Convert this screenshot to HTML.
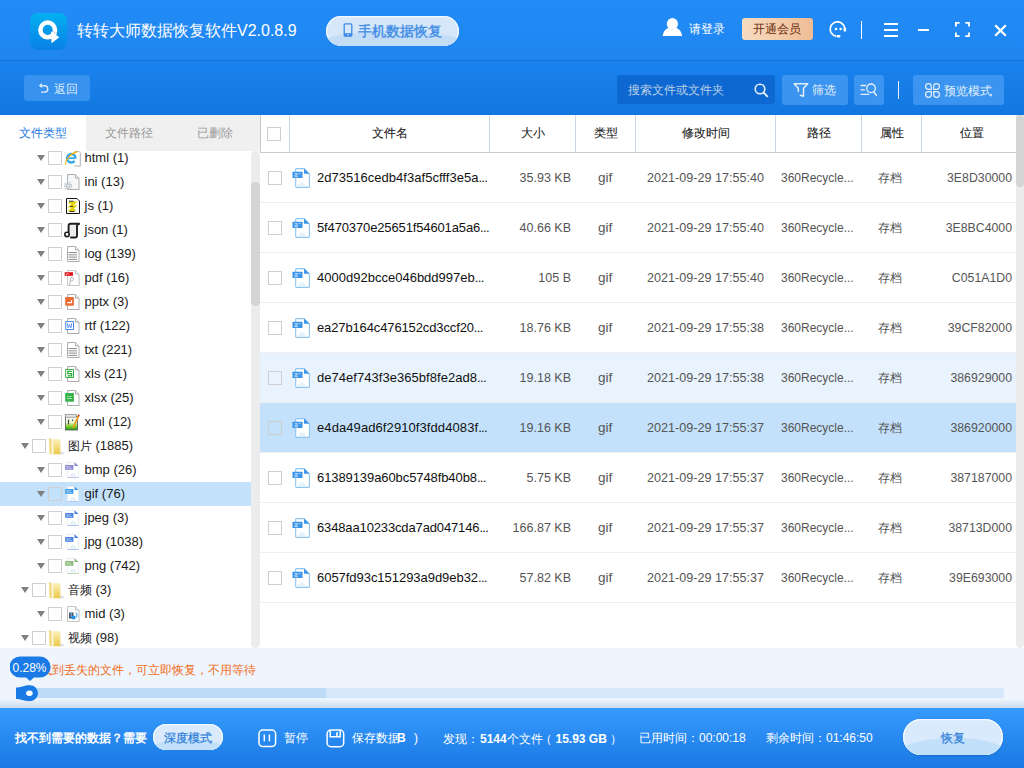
<!DOCTYPE html><html><head><meta charset="utf-8"><style>
*{box-sizing:border-box;margin:0;padding:0}
html,body{width:1024px;height:768px;overflow:hidden;background:#fff;font-family:"Liberation Sans", sans-serif;}
.a{position:absolute}
.t{position:absolute;white-space:nowrap;line-height:1}
#top{left:0;top:0;width:1024px;height:60px;background:linear-gradient(#228bf6,#1f86f0)}
#sep{left:0;top:60px;width:1024px;height:1px;background:#1275d9}
#tb{left:0;top:61px;width:1024px;height:54px;background:linear-gradient(#1b83ee,#1277e0)}
.btn{position:absolute;border-radius:3px;background:#3b94ef}
.cb{position:absolute;width:14px;height:14px;border:1px solid #cfcfcf;background:#fff}
.tri{position:absolute;width:0;height:0;border-left:4.5px solid transparent;border-right:4.5px solid transparent;border-top:6px solid #7f7f7f}
.tr{position:absolute;left:0;width:251px;height:24px}
.tl{position:absolute;font-size:13px;color:#1a1a1a;line-height:1;white-space:nowrap}
.row{position:absolute;left:260px;width:756px;height:50px;border-bottom:1px solid #eeeeee}
.hd{position:absolute;top:115px;height:38px;border-right:1px solid #c9d5e3;border-bottom:1px solid #c9c9c9}
.ht{position:absolute;font-size:12px;color:#222;-webkit-text-stroke:0.1px #222;line-height:1;white-space:nowrap}
.pill{position:absolute;overflow:hidden;background:#d9eafc;box-shadow:inset 0 0 0 1.2px #f2f8ff}
.gl{position:absolute;left:-8%;width:116%;height:100%;border-radius:50%;background:#c3e0fb}
.c{position:absolute;font-size:13px;color:#555;line-height:1;white-space:nowrap}
</style></head><body>
<div class="a" id="top"></div><div class="a" id="sep"></div><div class="a" id="tb"></div>
<svg class="a" style="left:30px;top:13px" width="37" height="37" viewBox="0 0 37 37">
<defs><linearGradient id="lg" x1="0" y1="0" x2="0" y2="1"><stop offset="0" stop-color="#02b1f1"/><stop offset="1" stop-color="#0a80e6"/></linearGradient></defs>
<rect x="0" y="0" width="37" height="37" rx="7.5" fill="url(#lg)"/>
<circle cx="17.7" cy="16.9" r="7.3" fill="none" stroke="#fff" stroke-width="4.5"/>
<path d="M21 18.4L29.3 24.2L21.5 30.2Z" fill="#fff"/>
<path d="M22.8 18.3L27 21.2" stroke="#cfd8e2" stroke-width="1.3" opacity=".85"/>
</svg>
<div class="t" style="left:77px;top:23px;font-size:16px;color:#fff">转转大师数据恢复软件V2.0.8.9</div>
<div class="pill" style="left:326px;top:16px;width:133px;height:30px;border-radius:15px;background:#d6e7f9"><div class="gl" style="top:15px;background:#c4ddf6"></div></div>
<svg class="a" style="left:343px;top:23px" width="10" height="14" viewBox="0 0 10 14"><rect x="1.2" y="0.8" width="7.6" height="12.4" rx="1.2" fill="none" stroke="#3d8ae6" stroke-width="1.3"/><rect x="1.2" y="10.2" width="7.6" height="3" fill="#3d8ae6"/><circle cx="5" cy="11.7" r=".8" fill="#d6e7f9"/></svg>
<div class="t" style="left:358px;top:24px;font-size:14px;color:#3d8ae6;-webkit-text-stroke:0.35px #3d8ae6">手机数据恢复</div>
<svg class="a" style="left:662px;top:18px" width="21" height="18" viewBox="0 0 21 18"><ellipse cx="10.4" cy="5.9" rx="5.6" ry="5.8" fill="#fff"/><path d="M0.7 18c0.4-4.3 3-7.2 6.3-8.2c1 1.2 2.2 1.8 3.4 1.8s2.4-.6 3.4-1.8c3.3 1 5.9 3.9 6.3 8.2z" fill="#fff"/></svg>
<div class="t" style="left:689px;top:22.5px;font-size:12px;color:#fff">请登录</div>
<div class="a" style="left:742px;top:18px;width:71px;height:22px;border-radius:3px;background:linear-gradient(90deg,#f7dcc2,#efbd95)"></div>
<div class="t" style="left:753px;top:22.5px;font-size:12px;color:#6a2e10">开通会员</div>
<svg class="a" style="left:826px;top:19px" width="24" height="22" viewBox="0 0 24 22">
<path d="M10.2 17.3A7.3 7.3 0 1 1 18.7 11.4" fill="none" stroke="#fff" stroke-width="1.7"/>
<circle cx="10" cy="9.9" r="1.25" fill="#fff"/><circle cx="14.6" cy="9.9" r="1.25" fill="#fff"/>
<rect x="17.6" y="8.8" width="2.5" height="3.6" rx=".6" fill="#fff"/>
<rect x="10.6" y="16" width="3.8" height="2.6" rx=".8" fill="#fff"/>
</svg>
<div class="a" style="left:861px;top:21px;width:1px;height:18px;background:#fff"></div>
<svg class="a" style="left:883px;top:22px" width="16" height="16" viewBox="0 0 16 16"><path d="M1 2h14M1 8h14M1 14h14" stroke="#fff" stroke-width="2"/></svg>
<div class="a" style="left:918px;top:29px;width:11px;height:2px;background:#fff"></div>
<svg class="a" style="left:954px;top:21px" width="17" height="17" viewBox="0 0 17 17"><path d="M1.9 5.6V1.9H5.6M11.3 1.9H15V5.6M15 11.4V15.1H11.3M5.6 15.1H1.9V11.4" fill="none" stroke="#fff" stroke-width="1.8"/></svg>
<svg class="a" style="left:993.5px;top:23.5px" width="13" height="13" viewBox="0 0 13 13"><path d="M1.2 1.2l10.6 10.6M11.8 1.2L1.2 11.8" stroke="#fff" stroke-width="2.3"/></svg>
<div class="btn" style="left:24px;top:75px;width:66px;height:26px;background:#3791ee"></div>
<svg class="a" style="left:36px;top:80px" width="16" height="16" viewBox="0 0 16 16"><path d="M5.2 5.8H8.6A3.15 3.15 0 0 1 8.6 12.1H5" fill="none" stroke="#dbeafb" stroke-width="1.4"/><path d="M2.8 5.6L5.9 3V8.2z" fill="#dbeafb"/></svg>
<div class="t" style="left:54px;top:83px;font-size:12px;color:#dbeafb">返回</div>
<div class="btn" style="left:617px;top:75px;width:158px;height:29px;background:#0d68d2"></div>
<div class="t" style="left:628px;top:83.5px;font-size:12px;color:#bccfe6">搜索文件或文件夹</div>
<svg class="a" style="left:754px;top:83px" width="15" height="15" viewBox="0 0 15 15"><circle cx="6" cy="6" r="4.8" fill="none" stroke="#e8f1fb" stroke-width="1.6"/><path d="M9.5 9.5l4.3 4.3" stroke="#e8f1fb" stroke-width="1.8"/></svg>
<div class="btn" style="left:782px;top:75px;width:66px;height:30px"></div>
<svg class="a" style="left:790px;top:78px" width="24" height="24" viewBox="0 0 24 24"><path d="M4.2 5.8H17.8M4.2 5.8L8.3 10.2V13.6M17.8 5.8L13.5 10.2V18.3L10.3 17.2" fill="none" stroke="#e6f0fb" stroke-width="1.5" stroke-linejoin="round" stroke-linecap="round"/></svg>
<div class="t" style="left:812px;top:84px;font-size:12px;color:#e6f0fb">筛选</div>
<div class="btn" style="left:854px;top:75px;width:30px;height:30px"></div>
<svg class="a" style="left:856px;top:78px" width="24" height="24" viewBox="0 0 24 24"><path d="M5 7.5h4.5M5 11.9h3.4M5 16.4h7.7" stroke="#e6f0fb" stroke-width="1.3" stroke-linecap="round"/><circle cx="15" cy="10.3" r="4.3" fill="none" stroke="#e6f0fb" stroke-width="1.3"/><path d="M18 14.3L20.5 17.5" stroke="#e6f0fb" stroke-width="1.4" stroke-linecap="round"/></svg>
<div class="a" style="left:898px;top:81px;width:1px;height:18px;background:#e6f0fb"></div>
<div class="btn" style="left:913px;top:75px;width:91px;height:30px"></div>
<svg class="a" style="left:924px;top:82px" width="17" height="17" viewBox="0 0 17 17"><g fill="none" stroke="#e6f0fb" stroke-width="1.2"><path d="M7.3 7.3H4.45A2.85 2.85 0 1 1 7.3 4.45z"/><path d="M9.7 7.3H12.55A2.85 2.85 0 1 0 9.7 4.45z"/><path d="M7.3 9.7H4.45A2.85 2.85 0 1 0 7.3 12.55z"/><path d="M9.7 9.7H12.55A2.85 2.85 0 1 1 9.7 12.55z"/></g></svg>
<div class="t" style="left:944px;top:84.5px;font-size:12px;color:#e6f0fb">预览模式</div>
<div class="a" style="left:86px;top:115px;width:174px;height:36px;background:#f0f0f0"></div>
<div class="t" style="left:19px;top:127px;font-size:12px;color:#1b78e2">文件类型</div>
<div class="t" style="left:105px;top:127px;font-size:12px;color:#9a9a9a">文件路径</div>
<div class="t" style="left:197px;top:127px;font-size:12px;color:#9a9a9a">已删除</div>
<div class="a" style="left:0;top:151px;width:260px;height:497px;overflow:hidden">
<div class="tr" style="top:-5px;">
<div class="tri" style="left:37px;top:9px"></div>
<div class="cb" style="left:48px;top:5px;"></div>
<svg class="a" style="left:64px;top:4px" width="17" height="17" viewBox="0 0 17 17"><path d="M10.5 1.5h4.5l1.3 1.3v13.2h-6" fill="#fff" stroke="#b0b0b0"/><path d="M11.6 8.2A4.3 4.3 0 1 0 10.6 11" fill="none" stroke="#36a6ec" stroke-width="2.4"/><path d="M3.2 8.2H11.6" stroke="#36a6ec" stroke-width="1.8"/><path d="M1.2 14.5C1.5 9.5 7 2.8 13.5 1.6" fill="none" stroke="#f4b400" stroke-width="1.2"/></svg>
<div class="tl" style="left:84.5px;top:5px">html (1)</div>
</div>
<div class="tr" style="top:19px;">
<div class="tri" style="left:37px;top:9px"></div>
<div class="cb" style="left:48px;top:5px;"></div>
<svg class="a" style="left:64px;top:4px" width="17" height="17" viewBox="0 0 17 17"><path d="M3.5 0.5h8l3.5 3.5v11.5h-11.5z" fill="#f4f6f8" stroke="#aeaeae"/><path d="M11.5 0.5v3.5h3.5" fill="#f0f0f0" stroke="#aeaeae"/><path d="M15.5 4.5v11.5" stroke="#d8d8d8"/><circle cx="4" cy="12" r="3.6" fill="none" stroke="#b8c0c8" stroke-width="1.4" stroke-dasharray="1.4 1.1"/><circle cx="4" cy="12" r="2.6" fill="#c2c9d0"/><circle cx="4" cy="12" r="1" fill="#eef0f2"/></svg>
<div class="tl" style="left:84.5px;top:5px">ini (13)</div>
</div>
<div class="tr" style="top:43px;">
<div class="tri" style="left:37px;top:9px"></div>
<div class="cb" style="left:48px;top:5px;"></div>
<svg class="a" style="left:64px;top:4px" width="17" height="17" viewBox="0 0 17 17"><path d="M2.5 0.5h10.5l2.5 2.5v12.5h-13z" fill="#fff" stroke="#151515"/><path d="M4.8 4.6h6l-4.4 3.8h4.4l-4.4 3.8h5" fill="none" stroke="#e6d400" stroke-width="2.2"/><path d="M5 3.2h4.5M6 8.4h3M5.5 13.5h5" stroke="#222" stroke-width="0.9"/></svg>
<div class="tl" style="left:84.5px;top:5px">js (1)</div>
</div>
<div class="tr" style="top:67px;">
<div class="tri" style="left:37px;top:9px"></div>
<div class="cb" style="left:48px;top:5px;"></div>
<svg class="a" style="left:64px;top:4px" width="17" height="17" viewBox="0 0 17 17"><path d="M4.5 2h8.5v13h-8.5z" fill="#ececec"/><path d="M4.6 10.5V3.6c0-1 .8-1.9 1.9-1.9H15.6" fill="none" stroke="#1e1e1e" stroke-width="1.9"/><path d="M15.6 1.7c-1.6 0-2.6.9-2.6 2.5V14c0 .8-.6 1.5-1.5 1.5H6.2" fill="none" stroke="#1e1e1e" stroke-width="1.9"/><circle cx="3" cy="12.4" r="2.2" fill="#fff" stroke="#1e1e1e" stroke-width="1.6"/></svg>
<div class="tl" style="left:84.5px;top:5px">json (1)</div>
</div>
<div class="tr" style="top:91px;">
<div class="tri" style="left:37px;top:9px"></div>
<div class="cb" style="left:48px;top:5px;"></div>
<svg class="a" style="left:64px;top:4px" width="17" height="17" viewBox="0 0 17 17"><path d="M3.5 0.5h8l3.5 3.5v11.5h-11.5z" fill="#fff" stroke="#aeaeae"/><path d="M11.5 0.5v3.5h3.5" fill="#f0f0f0" stroke="#aeaeae"/><path d="M15.5 4.5v11.5" stroke="#d8d8d8"/><path d="M4.5 6.5h8.5M4.5 8.8h8.5M4.5 11.1h8.5M4.5 13.4h8.5" stroke="#8c8c8c" stroke-width="1"/></svg>
<div class="tl" style="left:84.5px;top:5px">log (139)</div>
</div>
<div class="tr" style="top:115px;">
<div class="tri" style="left:37px;top:9px"></div>
<div class="cb" style="left:48px;top:5px;"></div>
<svg class="a" style="left:64px;top:4px" width="17" height="17" viewBox="0 0 17 17"><path d="M3.5 0.5h8l3.5 3.5v11.5h-11.5z" fill="#fff" stroke="#c8c8c8"/><path d="M11.5 0.5v3.5h3.5" fill="#f0f0f0" stroke="#c8c8c8"/><path d="M15.5 4.5v11.5" stroke="#d8d8d8"/><rect x="0.7" y="2.2" width="8.3" height="3.6" fill="#e3141d"/><path d="M2.2 5l1-1.4h1.2" fill="none" stroke="#fff" stroke-width="0.8"/><path d="M5.5 15.5c.4-2 .8-5 1.3-8.2c2.2-.2 3.2 1 2.7 2.4c-.5 1.4-2 1.6-3.2 1.1" fill="none" stroke="#b4b4b4" stroke-width="1"/></svg>
<div class="tl" style="left:84.5px;top:5px">pdf (16)</div>
</div>
<div class="tr" style="top:139px;">
<div class="tri" style="left:37px;top:9px"></div>
<div class="cb" style="left:48px;top:5px;"></div>
<svg class="a" style="left:64px;top:4px" width="17" height="17" viewBox="0 0 17 17"><path d="M3.5 0.5h8l3.5 3.5v11.5h-11.5z" fill="#fff" stroke="#aeaeae"/><path d="M11.5 0.5v3.5h3.5" fill="#f0f0f0" stroke="#aeaeae"/><path d="M15.5 4.5v11.5" stroke="#d8d8d8"/><rect x="1.2" y="3" width="8.7" height="8.7" rx="1" fill="#ec6a35"/><path d="M3.3 8.6h4.2V6.2" fill="none" stroke="#fff" stroke-width="1.2"/></svg>
<div class="tl" style="left:84.5px;top:5px">pptx (3)</div>
</div>
<div class="tr" style="top:163px;">
<div class="tri" style="left:37px;top:9px"></div>
<div class="cb" style="left:48px;top:5px;"></div>
<svg class="a" style="left:64px;top:4px" width="17" height="17" viewBox="0 0 17 17"><path d="M3.5 0.5h8l3.5 3.5v11.5h-11.5z" fill="#fff" stroke="#aeaeae"/><path d="M11.5 0.5v3.5h3.5" fill="#f0f0f0" stroke="#aeaeae"/><path d="M15.5 4.5v11.5" stroke="#d8d8d8"/><path d="M1.7 3.5h7.8v8H1.7z" fill="#fff" stroke="#4a8af0" stroke-width="1"/><path d="M3.2 5.2l.9 4.6 1.4-3.2 1.4 3.2.9-4.6" fill="none" stroke="#4a8af0" stroke-width="0.9"/></svg>
<div class="tl" style="left:84.5px;top:5px">rtf (122)</div>
</div>
<div class="tr" style="top:187px;">
<div class="tri" style="left:37px;top:9px"></div>
<div class="cb" style="left:48px;top:5px;"></div>
<svg class="a" style="left:64px;top:4px" width="17" height="17" viewBox="0 0 17 17"><path d="M3.5 0.5h8l3.5 3.5v11.5h-11.5z" fill="#fff" stroke="#aeaeae"/><path d="M11.5 0.5v3.5h3.5" fill="#f0f0f0" stroke="#aeaeae"/><path d="M15.5 4.5v11.5" stroke="#d8d8d8"/><path d="M4.5 6.5h8.5M4.5 8.8h8.5M4.5 11.1h8.5M4.5 13.4h8.5" stroke="#8c8c8c" stroke-width="1"/></svg>
<div class="tl" style="left:84.5px;top:5px">txt (221)</div>
</div>
<div class="tr" style="top:211px;">
<div class="tri" style="left:37px;top:9px"></div>
<div class="cb" style="left:48px;top:5px;"></div>
<svg class="a" style="left:64px;top:4px" width="17" height="17" viewBox="0 0 17 17"><path d="M3.5 0.5h8l3.5 3.5v11.5h-11.5z" fill="#fff" stroke="#aeaeae"/><path d="M11.5 0.5v3.5h3.5" fill="#f0f0f0" stroke="#aeaeae"/><path d="M15.5 4.5v11.5" stroke="#d8d8d8"/><path d="M1.7 3.5h7.8v8H1.7z" fill="#fff" stroke="#39ad45" stroke-width="1"/><path d="M7.8 5.3H3.9v2.3h3.7v2.3H3.6" fill="none" stroke="#2eaa3c" stroke-width="1.3"/></svg>
<div class="tl" style="left:84.5px;top:5px">xls (21)</div>
</div>
<div class="tr" style="top:235px;">
<div class="tri" style="left:37px;top:9px"></div>
<div class="cb" style="left:48px;top:5px;"></div>
<svg class="a" style="left:64px;top:4px" width="17" height="17" viewBox="0 0 17 17"><path d="M3.5 0.5h8l3.5 3.5v11.5h-11.5z" fill="#fff" stroke="#aeaeae"/><path d="M11.5 0.5v3.5h3.5" fill="#f0f0f0" stroke="#aeaeae"/><path d="M15.5 4.5v11.5" stroke="#d8d8d8"/><rect x="1.2" y="3" width="8.7" height="8.7" fill="#35b24a"/><path d="M3.2 6.5h1.5M5.5 6.5h2M3.2 8.5h4.5" stroke="#d8f4dc" stroke-width="0.8"/></svg>
<div class="tl" style="left:84.5px;top:5px">xlsx (25)</div>
</div>
<div class="tr" style="top:259px;">
<div class="tri" style="left:37px;top:9px"></div>
<div class="cb" style="left:48px;top:5px;"></div>
<svg class="a" style="left:64px;top:4px" width="17" height="17" viewBox="0 0 17 17"><defs><linearGradient id="xg" x1="0" y1="0" x2="0" y2="1"><stop offset="0" stop-color="#fff"/><stop offset=".45" stop-color="#e8f5d0"/><stop offset=".7" stop-color="#8ad62a"/><stop offset="1" stop-color="#1e9a1e"/></linearGradient></defs><rect x="1.5" y="2.5" width="12" height="13.5" fill="url(#xg)" stroke="#555" stroke-width="0.8"/><rect x="1.2" y="0.4" width="11" height="2.8" fill="#dfe4e8" stroke="#777" stroke-width="0.6"/><path d="M4.5 5.5v5M8.5 5.5v1.5" stroke="#444" stroke-width="1.2"/><path d="M9 14L14.8 1.2" stroke="#eaa21e" stroke-width="1.8"/><path d="M14.2 2.5l.8-1.8" stroke="#c03030" stroke-width="1.6"/></svg>
<div class="tl" style="left:84.5px;top:5px">xml (12)</div>
</div>
<div class="tr" style="top:283px;">
<div class="tri" style="left:21px;top:9px"></div>
<div class="cb" style="left:32px;top:5px;"></div>
<svg class="a" style="left:48px;top:3px" width="17" height="19" viewBox="0 0 17 19"><defs><linearGradient id="fg" x1="0" y1="0" x2="0" y2="1"><stop offset="0" stop-color="#fbf0b6"/><stop offset="1" stop-color="#ebc94c"/></linearGradient><linearGradient id="ff" x1="0" y1="0" x2="1" y2="0"><stop offset="0" stop-color="#efd57a"/><stop offset="1" stop-color="#f7e7a8"/></linearGradient></defs><ellipse cx="13" cy="16" rx="3" ry="1.6" fill="#c8c8d0" opacity=".55"/><path d="M5.2 2.2h6.2c.6 0 1 .4 1 1v14H5.4z" fill="url(#fg)"/><path d="M1 0.8L4.6 2.6L5.4 17.6L1.4 16.8z" fill="url(#ff)"/><path d="M4 2.5L4.6 17" stroke="#fff" stroke-width="0.9" opacity=".9"/></svg>
<div class="tl" style="left:68.4px;top:5px"><span style="font-size:12.2px;letter-spacing:-0.3px">图片</span> (1885)</div>
</div>
<div class="tr" style="top:307px;">
<div class="tri" style="left:37px;top:9px"></div>
<div class="cb" style="left:48px;top:5px;"></div>
<svg class="a" style="left:64px;top:4px" width="17" height="17" viewBox="0 0 17 17"><path d="M3.5 0.5h7.5l3.5 3.5v11.5h-11z" fill="#fff" stroke="#e4e9ef" stroke-width="0.8"/><path d="M3.5 15.5h11" stroke="#c3c1ea" stroke-width="1"/><path d="M10.5 0.3v3.7h4z" fill="#8a88d0"/><rect x="1.2" y="3" width="8.2" height="4.8" fill="#8a88d0"/><path d="M2.5 4.5h1.6v1.8H2.5M5.2 4.5h1.4M5.2 6.3h2.5" stroke="#fff" stroke-width="0.7" fill="none" opacity=".8"/><path d="M5.5 14.5c.6-2.2 1.8-3.5 3.5-3.5s2.9 1.3 3.5 3.5z" fill="#e8f0f8"/></svg>
<div class="tl" style="left:84.5px;top:5px">bmp (26)</div>
</div>
<div class="tr" style="top:331px;background:#c3e1fb">
<div class="tri" style="left:37px;top:9px"></div>
<div class="cb" style="left:48px;top:5px;background:transparent"></div>
<svg class="a" style="left:64px;top:4px" width="17" height="17" viewBox="0 0 17 17"><path d="M3.5 0.5h7.5l3.5 3.5v11.5h-11z" fill="#fff" stroke="#e4e9ef" stroke-width="0.8"/><path d="M3.5 15.5h11" stroke="#a9d0f3" stroke-width="1"/><path d="M10.5 0.3v3.7h4z" fill="#3c9be8"/><rect x="1.2" y="3" width="8.2" height="4.8" fill="#3c9be8"/><path d="M2.5 4.5h1.6v1.8H2.5M5.2 4.5h1.4M5.2 6.3h2.5" stroke="#fff" stroke-width="0.7" fill="none" opacity=".8"/><path d="M5.5 14.5c.6-2.2 1.8-3.5 3.5-3.5s2.9 1.3 3.5 3.5z" fill="#e8f0f8"/></svg>
<div class="tl" style="left:84.5px;top:5px">gif (76)</div>
</div>
<div class="tr" style="top:355px;">
<div class="tri" style="left:37px;top:9px"></div>
<div class="cb" style="left:48px;top:5px;"></div>
<svg class="a" style="left:64px;top:4px" width="17" height="17" viewBox="0 0 17 17"><path d="M3.5 0.5h7.5l3.5 3.5v11.5h-11z" fill="#fff" stroke="#e4e9ef" stroke-width="0.8"/><path d="M3.5 15.5h11" stroke="#a9c4f0" stroke-width="1"/><path d="M10.5 0.3v3.7h4z" fill="#4a80e0"/><rect x="1.2" y="3" width="8.2" height="4.8" fill="#4a80e0"/><path d="M2.5 4.5h1.6v1.8H2.5M5.2 4.5h1.4M5.2 6.3h2.5" stroke="#fff" stroke-width="0.7" fill="none" opacity=".8"/><path d="M5.5 14.5c.6-2.2 1.8-3.5 3.5-3.5s2.9 1.3 3.5 3.5z" fill="#e8f0f8"/></svg>
<div class="tl" style="left:84.5px;top:5px">jpeg (3)</div>
</div>
<div class="tr" style="top:379px;">
<div class="tri" style="left:37px;top:9px"></div>
<div class="cb" style="left:48px;top:5px;"></div>
<svg class="a" style="left:64px;top:4px" width="17" height="17" viewBox="0 0 17 17"><path d="M3.5 0.5h7.5l3.5 3.5v11.5h-11z" fill="#fff" stroke="#e4e9ef" stroke-width="0.8"/><path d="M3.5 15.5h11" stroke="#a9c4f0" stroke-width="1"/><path d="M10.5 0.3v3.7h4z" fill="#4a80e0"/><rect x="1.2" y="3" width="8.2" height="4.8" fill="#4a80e0"/><path d="M2.5 4.5h1.6v1.8H2.5M5.2 4.5h1.4M5.2 6.3h2.5" stroke="#fff" stroke-width="0.7" fill="none" opacity=".8"/><path d="M5.5 14.5c.6-2.2 1.8-3.5 3.5-3.5s2.9 1.3 3.5 3.5z" fill="#e8f0f8"/></svg>
<div class="tl" style="left:84.5px;top:5px">jpg (1038)</div>
</div>
<div class="tr" style="top:403px;">
<div class="tri" style="left:37px;top:9px"></div>
<div class="cb" style="left:48px;top:5px;"></div>
<svg class="a" style="left:64px;top:4px" width="17" height="17" viewBox="0 0 17 17"><path d="M3.5 0.5h7.5l3.5 3.5v11.5h-11z" fill="#fff" stroke="#e4e9ef" stroke-width="0.8"/><path d="M3.5 15.5h11" stroke="#b9dcae" stroke-width="1"/><path d="M10.5 0.3v3.7h4z" fill="#8ab87a"/><rect x="1.2" y="3" width="8.2" height="4.8" fill="#8ab87a"/><path d="M2.5 4.5h1.6v1.8H2.5M5.2 4.5h1.4M5.2 6.3h2.5" stroke="#fff" stroke-width="0.7" fill="none" opacity=".8"/><path d="M5.5 14.5c.6-2.2 1.8-3.5 3.5-3.5s2.9 1.3 3.5 3.5z" fill="#e8f0f8"/></svg>
<div class="tl" style="left:84.5px;top:5px">png (742)</div>
</div>
<div class="tr" style="top:427px;">
<div class="tri" style="left:21px;top:9px"></div>
<div class="cb" style="left:32px;top:5px;"></div>
<svg class="a" style="left:48px;top:3px" width="17" height="19" viewBox="0 0 17 19"><defs><linearGradient id="fg" x1="0" y1="0" x2="0" y2="1"><stop offset="0" stop-color="#fbf0b6"/><stop offset="1" stop-color="#ebc94c"/></linearGradient><linearGradient id="ff" x1="0" y1="0" x2="1" y2="0"><stop offset="0" stop-color="#efd57a"/><stop offset="1" stop-color="#f7e7a8"/></linearGradient></defs><ellipse cx="13" cy="16" rx="3" ry="1.6" fill="#c8c8d0" opacity=".55"/><path d="M5.2 2.2h6.2c.6 0 1 .4 1 1v14H5.4z" fill="url(#fg)"/><path d="M1 0.8L4.6 2.6L5.4 17.6L1.4 16.8z" fill="url(#ff)"/><path d="M4 2.5L4.6 17" stroke="#fff" stroke-width="0.9" opacity=".9"/></svg>
<div class="tl" style="left:68.4px;top:5px"><span style="font-size:12.2px;letter-spacing:-0.3px">音频</span> (3)</div>
</div>
<div class="tr" style="top:451px;">
<div class="tri" style="left:37px;top:9px"></div>
<div class="cb" style="left:48px;top:5px;"></div>
<svg class="a" style="left:64px;top:4px" width="17" height="17" viewBox="0 0 17 17"><path d="M3.5 0.5h8l3.5 3.5v11.5h-11.5z" fill="#fff" stroke="#c4c4c4"/><path d="M11.5 0.5v3.5h3.5" fill="#f0f0f0" stroke="#c4c4c4"/><path d="M15.5 4.5v11.5" stroke="#d8d8d8"/><rect x="5" y="6.5" width="4.5" height="6" fill="#4a5868"/><rect x="6.5" y="7" width="1.5" height="4" fill="#3ac0f0"/><rect x="6.3" y="8.5" width="1.2" height="1.2" fill="#e83040"/><circle cx="9.6" cy="11.6" r="2" fill="#1e8ee8"/><path d="M11.6 6.6a3 3 0 0 1 .6 4.6" fill="none" stroke="#3aa0f0" stroke-width="1.1"/></svg>
<div class="tl" style="left:84.5px;top:5px">mid (3)</div>
</div>
<div class="tr" style="top:475px;">
<div class="tri" style="left:21px;top:9px"></div>
<div class="cb" style="left:32px;top:5px;"></div>
<svg class="a" style="left:48px;top:3px" width="17" height="19" viewBox="0 0 17 19"><defs><linearGradient id="fg" x1="0" y1="0" x2="0" y2="1"><stop offset="0" stop-color="#fbf0b6"/><stop offset="1" stop-color="#ebc94c"/></linearGradient><linearGradient id="ff" x1="0" y1="0" x2="1" y2="0"><stop offset="0" stop-color="#efd57a"/><stop offset="1" stop-color="#f7e7a8"/></linearGradient></defs><ellipse cx="13" cy="16" rx="3" ry="1.6" fill="#c8c8d0" opacity=".55"/><path d="M5.2 2.2h6.2c.6 0 1 .4 1 1v14H5.4z" fill="url(#fg)"/><path d="M1 0.8L4.6 2.6L5.4 17.6L1.4 16.8z" fill="url(#ff)"/><path d="M4 2.5L4.6 17" stroke="#fff" stroke-width="0.9" opacity=".9"/></svg>
<div class="tl" style="left:68.4px;top:5px"><span style="font-size:12.2px;letter-spacing:-0.3px">视频</span> (98)</div>
</div>
<div class="a" style="left:251px;top:0;width:9px;height:497px;border-radius:4.5px;background:#ececec"></div>
<div class="a" style="left:251px;top:31px;width:9px;height:124px;border-radius:4.5px;background:#d4d4d4"></div>
</div>
<div class="hd" style="left:260px;width:30px;border-left:1px solid #c9c9c9;"></div>
<div class="hd" style="left:289px;width:201px;"></div>
<div class="hd" style="left:489px;width:87px;"></div>
<div class="hd" style="left:575px;width:61px;"></div>
<div class="hd" style="left:635px;width:141px;"></div>
<div class="hd" style="left:775px;width:87px;"></div>
<div class="hd" style="left:861px;width:61px;"></div>
<div class="hd" style="left:921px;width:96px;"></div>
<div class="cb" style="left:267px;top:127px"></div>
<div class="ht" style="left:372px;top:127.3px">文件名</div>
<div class="ht" style="left:521px;top:127.3px">大小</div>
<div class="ht" style="left:594px;top:127.3px">类型</div>
<div class="ht" style="left:682px;top:127.3px">修改时间</div>
<div class="ht" style="left:807px;top:127.3px">路径</div>
<div class="ht" style="left:880px;top:127.3px">属性</div>
<div class="ht" style="left:960px;top:127.3px">位置</div>
<div class="row" style="top:153px;background:#fff"></div>
<div class="cb" style="left:268px;top:171px;"></div>
<svg class="a" style="left:292px;top:168px" width="18" height="20" viewBox="0 0 18 20"><path d="M4.5 0.6h7.5l5.4 5.4v12.6a0.8 0.8 0 0 1-0.8 0.8H4.5a0.8 0.8 0 0 1-0.8-0.8V1.4a0.8 0.8 0 0 1 0.8-0.8z" fill="#fff" stroke="#8dc4f0" stroke-width="1.1"/><path d="M12 0.6v4.6a0.6 0.6 0 0 0 .6.6h4.8z" fill="#3c95e8"/><rect x="0.5" y="3.8" width="10" height="6.1" rx="0.5" fill="#3c95e8"/><path d="M2.8 5.6h2.4v1.6H3.2v1.5h2.8M6.8 5.6h1.6" stroke="#dcedfc" fill="none" stroke-width="0.8"/><path d="M6 18.2c.5-2.6 2.1-4 4-4s3.5 1.4 4 4z" fill="#e5f3fd"/></svg>
<div class="c" style="left:317px;top:171px;color:#111;letter-spacing:0.028px">2d73516cedb4f3af5cfff3e5a<span style="letter-spacing:-0.7px">...</span></div>
<div class="c" style="right:453px;top:172px;font-size:12.5px">35.93 KB</div>
<div class="c" style="left:598px;top:171px;font-size:13.5px">gif</div>
<div class="c" style="left:647px;top:172px;font-size:12.6px">2021-09-29 17:55:40</div>
<div class="c" style="left:781px;top:172px;font-size:12px">360Recycle...</div>
<div class="c" style="left:878px;top:171.6px;font-size:12px">存档</div>
<div class="c" style="right:12px;top:172.3px;font-size:12.3px">3E8D30000</div>
<div class="row" style="top:203px;background:#fff"></div>
<div class="cb" style="left:268px;top:221px;"></div>
<svg class="a" style="left:292px;top:218px" width="18" height="20" viewBox="0 0 18 20"><path d="M4.5 0.6h7.5l5.4 5.4v12.6a0.8 0.8 0 0 1-0.8 0.8H4.5a0.8 0.8 0 0 1-0.8-0.8V1.4a0.8 0.8 0 0 1 0.8-0.8z" fill="#fff" stroke="#8dc4f0" stroke-width="1.1"/><path d="M12 0.6v4.6a0.6 0.6 0 0 0 .6.6h4.8z" fill="#3c95e8"/><rect x="0.5" y="3.8" width="10" height="6.1" rx="0.5" fill="#3c95e8"/><path d="M2.8 5.6h2.4v1.6H3.2v1.5h2.8M6.8 5.6h1.6" stroke="#dcedfc" fill="none" stroke-width="0.8"/><path d="M6 18.2c.5-2.6 2.1-4 4-4s3.5 1.4 4 4z" fill="#e5f3fd"/></svg>
<div class="c" style="left:317px;top:221px;color:#111;letter-spacing:-0.133px">5f470370e25651f54601a5a6<span style="letter-spacing:-0.7px">...</span></div>
<div class="c" style="right:453px;top:222px;font-size:12.5px">40.66 KB</div>
<div class="c" style="left:598px;top:221px;font-size:13.5px">gif</div>
<div class="c" style="left:647px;top:222px;font-size:12.6px">2021-09-29 17:55:40</div>
<div class="c" style="left:781px;top:222px;font-size:12px">360Recycle...</div>
<div class="c" style="left:878px;top:221.6px;font-size:12px">存档</div>
<div class="c" style="right:12px;top:222.3px;font-size:12.3px">3E8BC4000</div>
<div class="row" style="top:253px;background:#fff"></div>
<div class="cb" style="left:268px;top:271px;"></div>
<svg class="a" style="left:292px;top:268px" width="18" height="20" viewBox="0 0 18 20"><path d="M4.5 0.6h7.5l5.4 5.4v12.6a0.8 0.8 0 0 1-0.8 0.8H4.5a0.8 0.8 0 0 1-0.8-0.8V1.4a0.8 0.8 0 0 1 0.8-0.8z" fill="#fff" stroke="#8dc4f0" stroke-width="1.1"/><path d="M12 0.6v4.6a0.6 0.6 0 0 0 .6.6h4.8z" fill="#3c95e8"/><rect x="0.5" y="3.8" width="10" height="6.1" rx="0.5" fill="#3c95e8"/><path d="M2.8 5.6h2.4v1.6H3.2v1.5h2.8M6.8 5.6h1.6" stroke="#dcedfc" fill="none" stroke-width="0.8"/><path d="M6 18.2c.5-2.6 2.1-4 4-4s3.5 1.4 4 4z" fill="#e5f3fd"/></svg>
<div class="c" style="left:317px;top:271px;color:#111;letter-spacing:0.009px">4000d92bcce046bdd997eb<span style="letter-spacing:-0.7px">...</span></div>
<div class="c" style="right:453px;top:272px;font-size:12.5px">105 B</div>
<div class="c" style="left:598px;top:271px;font-size:13.5px">gif</div>
<div class="c" style="left:647px;top:272px;font-size:12.6px">2021-09-29 17:55:40</div>
<div class="c" style="left:781px;top:272px;font-size:12px">360Recycle...</div>
<div class="c" style="left:878px;top:271.6px;font-size:12px">存档</div>
<div class="c" style="right:12px;top:272.3px;font-size:12.3px">C051A1D0</div>
<div class="row" style="top:303px;background:#fff"></div>
<div class="cb" style="left:268px;top:321px;"></div>
<svg class="a" style="left:292px;top:318px" width="18" height="20" viewBox="0 0 18 20"><path d="M4.5 0.6h7.5l5.4 5.4v12.6a0.8 0.8 0 0 1-0.8 0.8H4.5a0.8 0.8 0 0 1-0.8-0.8V1.4a0.8 0.8 0 0 1 0.8-0.8z" fill="#fff" stroke="#8dc4f0" stroke-width="1.1"/><path d="M12 0.6v4.6a0.6 0.6 0 0 0 .6.6h4.8z" fill="#3c95e8"/><rect x="0.5" y="3.8" width="10" height="6.1" rx="0.5" fill="#3c95e8"/><path d="M2.8 5.6h2.4v1.6H3.2v1.5h2.8M6.8 5.6h1.6" stroke="#dcedfc" fill="none" stroke-width="0.8"/><path d="M6 18.2c.5-2.6 2.1-4 4-4s3.5 1.4 4 4z" fill="#e5f3fd"/></svg>
<div class="c" style="left:317px;top:321px;color:#111;letter-spacing:-0.126px">ea27b164c476152cd3ccf20<span style="letter-spacing:-0.7px">...</span></div>
<div class="c" style="right:453px;top:322px;font-size:12.5px">18.76 KB</div>
<div class="c" style="left:598px;top:321px;font-size:13.5px">gif</div>
<div class="c" style="left:647px;top:322px;font-size:12.6px">2021-09-29 17:55:38</div>
<div class="c" style="left:781px;top:322px;font-size:12px">360Recycle...</div>
<div class="c" style="left:878px;top:321.6px;font-size:12px">存档</div>
<div class="c" style="right:12px;top:322.3px;font-size:12.3px">39CF82000</div>
<div class="row" style="top:353px;background:#e8f3fd"></div>
<div class="cb" style="left:268px;top:371px;background:transparent"></div>
<svg class="a" style="left:292px;top:368px" width="18" height="20" viewBox="0 0 18 20"><path d="M4.5 0.6h7.5l5.4 5.4v12.6a0.8 0.8 0 0 1-0.8 0.8H4.5a0.8 0.8 0 0 1-0.8-0.8V1.4a0.8 0.8 0 0 1 0.8-0.8z" fill="#fff" stroke="#8dc4f0" stroke-width="1.1"/><path d="M12 0.6v4.6a0.6 0.6 0 0 0 .6.6h4.8z" fill="#3c95e8"/><rect x="0.5" y="3.8" width="10" height="6.1" rx="0.5" fill="#3c95e8"/><path d="M2.8 5.6h2.4v1.6H3.2v1.5h2.8M6.8 5.6h1.6" stroke="#dcedfc" fill="none" stroke-width="0.8"/><path d="M6 18.2c.5-2.6 2.1-4 4-4s3.5 1.4 4 4z" fill="#e5f3fd"/></svg>
<div class="c" style="left:317px;top:371px;color:#111;letter-spacing:0.042px">de74ef743f3e365bf8fe2ad8<span style="letter-spacing:-0.7px">...</span></div>
<div class="c" style="right:453px;top:372px;font-size:12.5px">19.18 KB</div>
<div class="c" style="left:598px;top:371px;font-size:13.5px">gif</div>
<div class="c" style="left:647px;top:372px;font-size:12.6px">2021-09-29 17:55:38</div>
<div class="c" style="left:781px;top:372px;font-size:12px">360Recycle...</div>
<div class="c" style="left:878px;top:371.6px;font-size:12px">存档</div>
<div class="c" style="right:12px;top:372.3px;font-size:12.3px">386929000</div>
<div class="row" style="top:403px;background:#c3e1fb"></div>
<div class="cb" style="left:268px;top:421px;background:transparent"></div>
<svg class="a" style="left:292px;top:418px" width="18" height="20" viewBox="0 0 18 20"><path d="M4.5 0.6h7.5l5.4 5.4v12.6a0.8 0.8 0 0 1-0.8 0.8H4.5a0.8 0.8 0 0 1-0.8-0.8V1.4a0.8 0.8 0 0 1 0.8-0.8z" fill="#fff" stroke="#8dc4f0" stroke-width="1.1"/><path d="M12 0.6v4.6a0.6 0.6 0 0 0 .6.6h4.8z" fill="#3c95e8"/><rect x="0.5" y="3.8" width="10" height="6.1" rx="0.5" fill="#3c95e8"/><path d="M2.8 5.6h2.4v1.6H3.2v1.5h2.8M6.8 5.6h1.6" stroke="#dcedfc" fill="none" stroke-width="0.8"/><path d="M6 18.2c.5-2.6 2.1-4 4-4s3.5 1.4 4 4z" fill="#e5f3fd"/></svg>
<div class="c" style="left:317px;top:421px;color:#111;letter-spacing:0.088px">e4da49ad6f2910f3fdd4083f<span style="letter-spacing:-0.7px">...</span></div>
<div class="c" style="right:453px;top:422px;font-size:12.5px">19.16 KB</div>
<div class="c" style="left:598px;top:421px;font-size:13.5px">gif</div>
<div class="c" style="left:647px;top:422px;font-size:12.6px">2021-09-29 17:55:37</div>
<div class="c" style="left:781px;top:422px;font-size:12px">360Recycle...</div>
<div class="c" style="left:878px;top:421.6px;font-size:12px">存档</div>
<div class="c" style="right:12px;top:422.3px;font-size:12.3px">386920000</div>
<div class="row" style="top:453px;background:#fff"></div>
<div class="cb" style="left:268px;top:471px;"></div>
<svg class="a" style="left:292px;top:468px" width="18" height="20" viewBox="0 0 18 20"><path d="M4.5 0.6h7.5l5.4 5.4v12.6a0.8 0.8 0 0 1-0.8 0.8H4.5a0.8 0.8 0 0 1-0.8-0.8V1.4a0.8 0.8 0 0 1 0.8-0.8z" fill="#fff" stroke="#8dc4f0" stroke-width="1.1"/><path d="M12 0.6v4.6a0.6 0.6 0 0 0 .6.6h4.8z" fill="#3c95e8"/><rect x="0.5" y="3.8" width="10" height="6.1" rx="0.5" fill="#3c95e8"/><path d="M2.8 5.6h2.4v1.6H3.2v1.5h2.8M6.8 5.6h1.6" stroke="#dcedfc" fill="none" stroke-width="0.8"/><path d="M6 18.2c.5-2.6 2.1-4 4-4s3.5 1.4 4 4z" fill="#e5f3fd"/></svg>
<div class="c" style="left:317px;top:471px;color:#111;letter-spacing:-0.087px">61389139a60bc5748fb40b8<span style="letter-spacing:-0.7px">...</span></div>
<div class="c" style="right:453px;top:472px;font-size:12.5px">5.75 KB</div>
<div class="c" style="left:598px;top:471px;font-size:13.5px">gif</div>
<div class="c" style="left:647px;top:472px;font-size:12.6px">2021-09-29 17:55:37</div>
<div class="c" style="left:781px;top:472px;font-size:12px">360Recycle...</div>
<div class="c" style="left:878px;top:471.6px;font-size:12px">存档</div>
<div class="c" style="right:12px;top:472.3px;font-size:12.3px">387187000</div>
<div class="row" style="top:503px;background:#fff"></div>
<div class="cb" style="left:268px;top:521px;"></div>
<svg class="a" style="left:292px;top:518px" width="18" height="20" viewBox="0 0 18 20"><path d="M4.5 0.6h7.5l5.4 5.4v12.6a0.8 0.8 0 0 1-0.8 0.8H4.5a0.8 0.8 0 0 1-0.8-0.8V1.4a0.8 0.8 0 0 1 0.8-0.8z" fill="#fff" stroke="#8dc4f0" stroke-width="1.1"/><path d="M12 0.6v4.6a0.6 0.6 0 0 0 .6.6h4.8z" fill="#3c95e8"/><rect x="0.5" y="3.8" width="10" height="6.1" rx="0.5" fill="#3c95e8"/><path d="M2.8 5.6h2.4v1.6H3.2v1.5h2.8M6.8 5.6h1.6" stroke="#dcedfc" fill="none" stroke-width="0.8"/><path d="M6 18.2c.5-2.6 2.1-4 4-4s3.5 1.4 4 4z" fill="#e5f3fd"/></svg>
<div class="c" style="left:317px;top:521px;color:#111;letter-spacing:-0.139px">6348aa10233cda7ad047146<span style="letter-spacing:-0.7px">...</span></div>
<div class="c" style="right:453px;top:522px;font-size:12.5px">166.87 KB</div>
<div class="c" style="left:598px;top:521px;font-size:13.5px">gif</div>
<div class="c" style="left:647px;top:522px;font-size:12.6px">2021-09-29 17:55:37</div>
<div class="c" style="left:781px;top:522px;font-size:12px">360Recycle...</div>
<div class="c" style="left:878px;top:521.6px;font-size:12px">存档</div>
<div class="c" style="right:12px;top:522.3px;font-size:12.3px">38713D000</div>
<div class="row" style="top:553px;background:#fff"></div>
<div class="cb" style="left:268px;top:571px;"></div>
<svg class="a" style="left:292px;top:568px" width="18" height="20" viewBox="0 0 18 20"><path d="M4.5 0.6h7.5l5.4 5.4v12.6a0.8 0.8 0 0 1-0.8 0.8H4.5a0.8 0.8 0 0 1-0.8-0.8V1.4a0.8 0.8 0 0 1 0.8-0.8z" fill="#fff" stroke="#8dc4f0" stroke-width="1.1"/><path d="M12 0.6v4.6a0.6 0.6 0 0 0 .6.6h4.8z" fill="#3c95e8"/><rect x="0.5" y="3.8" width="10" height="6.1" rx="0.5" fill="#3c95e8"/><path d="M2.8 5.6h2.4v1.6H3.2v1.5h2.8M6.8 5.6h1.6" stroke="#dcedfc" fill="none" stroke-width="0.8"/><path d="M6 18.2c.5-2.6 2.1-4 4-4s3.5 1.4 4 4z" fill="#e5f3fd"/></svg>
<div class="c" style="left:317px;top:571px;color:#111;letter-spacing:-0.039px">6057fd93c151293a9d9eb32<span style="letter-spacing:-0.7px">...</span></div>
<div class="c" style="right:453px;top:572px;font-size:12.5px">57.82 KB</div>
<div class="c" style="left:598px;top:571px;font-size:13.5px">gif</div>
<div class="c" style="left:647px;top:572px;font-size:12.6px">2021-09-29 17:55:37</div>
<div class="c" style="left:781px;top:572px;font-size:12px">360Recycle...</div>
<div class="c" style="left:878px;top:571.6px;font-size:12px">存档</div>
<div class="c" style="right:12px;top:572.3px;font-size:12.3px">39E693000</div>
<div class="a" style="left:1016px;top:115px;width:8px;height:533px;border-radius:0 0 4px 4px;background:#ececec"></div>
<div class="a" style="left:1016px;top:115px;width:8px;height:72px;border-radius:4px;background:#d4d4d4"></div>
<div class="a" style="left:0;top:648px;width:1024px;height:60px;background:linear-gradient(#eef5fd 0%,#eef5fd 85%,#c9d9eb 100%)"></div>
<div class="t" style="left:40px;top:664px;font-size:12px;color:#f26d21">找到丢失的文件，可立即恢复，不用等待</div>
<div class="a" style="left:30px;top:688px;width:974px;height:10px;border-radius:0 2px 2px 0;background:#d4e7fb"></div>
<div class="a" style="left:30px;top:688px;width:296px;height:10px;background:#bbdbf9"></div>
<svg class="a" style="left:10px;top:656px" width="41" height="26" viewBox="0 0 41 26"><path d="M10 0.5h20a10.5 10.5 0 0 1 0 21h-6l-4 3.5-4-3.5h-6a10.5 10.5 0 0 1 0-21z" fill="#1a7ae6"/></svg>
<div class="t" style="left:12.5px;top:662px;font-size:12px;color:#fff">0.28%</div>
<svg class="a" style="left:16px;top:685px" width="23" height="17" viewBox="0 0 23 17"><path d="M0 2.6C4.5 2.6 8 0.2 14 0.2A8 8 0 0 1 14 16.2C8 16.2 4.5 14 0 14Z" fill="#1a7ae6"/><ellipse cx="13.4" cy="8.2" rx="3.3" ry="2.7" fill="#fff"/></svg>
<div class="a" style="left:0;top:708px;width:1024px;height:60px;background:linear-gradient(#369bfd,#1a78e4)"></div>
<div class="t" style="left:15px;top:732px;font-size:12px;color:#fff;font-weight:bold">找不到需要的数据？需要</div>
<div class="pill" style="left:153px;top:724px;width:70px;height:26px;border-radius:13px"><div class="gl" style="top:15px"></div></div>
<div class="t" style="left:164px;top:732px;font-size:12px;color:#3583da;-webkit-text-stroke:0.3px #3583da">深度模式</div>
<svg class="a" style="left:257px;top:728px" width="20" height="20" viewBox="0 0 20 20"><rect x="2" y="2.1" width="16.6" height="16.4" rx="3.8" fill="none" stroke="#fff" stroke-width="1.5"/><path d="M7.3 6.6V13.2M12.4 6.6V13.2" stroke="#fff" stroke-width="1.5"/></svg>
<div class="t" style="left:284px;top:732px;font-size:12px;color:#fff">暂停</div>
<svg class="a" style="left:325px;top:728px" width="20" height="20" viewBox="0 0 20 20"><rect x="2.1" y="2.1" width="16.6" height="16.6" rx="3.8" fill="none" stroke="#fff" stroke-width="1.5"/><path d="M5.2 2.2V8.7H15.2V2.2" fill="none" stroke="#fff" stroke-width="1.5"/><path d="M12 4.2V7.9" stroke="#fff" stroke-width="1.6"/></svg>
<div class="t" style="left:352px;top:732px;font-size:12px;color:#fff">保存数据</div>
<div class="t" style="left:397px;top:732px;font-size:12px;color:#fff;font-weight:bold">B</div>
<div class="t" style="left:414px;top:732px;font-size:12px;color:#fff">)</div>
<div class="t" style="left:443px;top:732.5px;font-size:12px;color:#fff">发现：</div>
<div class="t" style="left:480px;top:732.5px;font-size:12px;color:#fff;font-weight:bold">5144</div>
<div class="t" style="left:507px;top:732.5px;font-size:12px;color:#fff">个文件</div>
<div class="t" style="left:540px;top:732.5px;font-size:12px;color:#fff">（</div>
<div class="t" style="left:555.5px;top:732.5px;font-size:12px;color:#fff;font-weight:bold">15.93 GB</div>
<div class="t" style="left:610px;top:732.5px;font-size:12px;color:#fff">）</div>
<div class="t" style="left:639px;top:732px;font-size:12px;color:#fff">已用时间：00:00:18</div>
<div class="t" style="left:766px;top:732px;font-size:12px;color:#fff">剩余时间：01:46:50</div>
<div class="pill" style="left:903px;top:719px;width:100px;height:36px;border-radius:18px;box-shadow:inset 0 0 0 1.2px #f4f9ff,0 1px 2px rgba(0,40,100,.2)"><div class="gl" style="top:19px"></div></div>
<div class="t" style="left:941px;top:732px;font-size:12px;color:#3a86dc;-webkit-text-stroke:0.3px #3a86dc">恢复</div>
</body></html>
